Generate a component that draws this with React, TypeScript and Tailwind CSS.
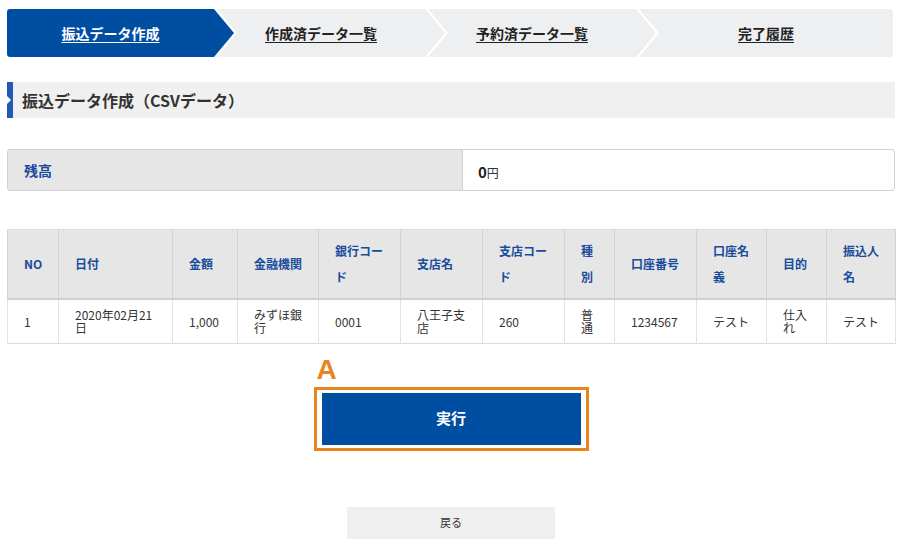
import React from 'react';

const steps = [
  { label: '振込データ作成', active: true },
  { label: '作成済データ一覧', active: false },
  { label: '予約済データ一覧', active: false },
  { label: '完了履歴', active: false },
];

const headers = ['NO', '日付', '金額', '金融機関', '銀行コード', '支店名', '支店コード', '種別', '口座番号', '口座名義', '目的', '振込人名'];
const row = ['1', '2020年02月21日', '1,000', 'みずほ銀行', '0001', '八王子支店', '260', '普通', '1234567', 'テスト', '仕入れ', 'テスト'];
const widths = ['w-[51px]', 'w-[114px]', 'w-[65px]', 'w-[81px]', 'w-[82px]', 'w-[82px]', 'w-[82px]', 'w-[50px]', 'w-[82px]', 'w-[70px]', 'w-[60px]', 'w-[69px]'];

const StepBar: React.FC = () => (
  <div className="flex h-[48px] mr-[2px]">
    {steps.map((step, i) => {
      const first = i === 0;
      const last = i === steps.length - 1;
      const shape = first
        ? 'w-[227px] rounded-l-[3px] pr-[20px] [clip-path:polygon(0_0,calc(100%_-_20px)_0,100%_50%,calc(100%_-_20px)_100%,0_100%)]'
        : last
          ? 'flex-1 -ml-[17px] rounded-r-[3px] [clip-path:polygon(0_0,100%_0,100%_100%,0_100%,20px_50%)]'
          : 'w-[228px] -ml-[17px] pr-[20px] [clip-path:polygon(0_0,calc(100%_-_20px)_0,100%_50%,calc(100%_-_20px)_100%,0_100%,20px_50%)]';
      return (
        <div
          key={i}
          className={`${shape} flex items-center justify-center ${step.active ? 'bg-[#004ea2] text-white' : 'bg-[#eeeff0] text-[#222]'}`}
        >
          <span className="text-[14px] font-bold underline underline-offset-[3px]">{step.label}</span>
        </div>
      );
    })}
  </div>
);

export default function App() {
  return (
    <div className="w-[910px] h-[547px] bg-white pt-[9px] font-['Noto_Sans_CJK_JP',sans-serif] text-[#333]">
      <div className="w-[888px] ml-[7px]">
        <StepBar />

        <div className="mt-[25px] h-[36px] flex items-center bg-[#f0f0f0]">
          <div className="relative w-[6px] h-full bg-[#1f5bb5]">
            <div className="absolute left-0 top-1/2 -translate-y-1/2 w-0 h-0 border-y-[4px] border-y-transparent border-l-[4px] border-l-white" />
          </div>
          <h2 className="ml-[9px] text-[16px] font-bold leading-none text-[#333]">振込データ作成（CSVデータ）</h2>
        </div>

        <div className="mt-[31px] flex h-[42px]">
          <div className="w-[456px] flex items-center bg-[#e6e6e6] border border-[#d2d2d2] rounded-l-[3px] pl-[16px]">
            <span className="text-[14px] font-bold text-[#1a4c9c]">残高</span>
          </div>
          <div className="flex-1 flex items-baseline pt-[11px] bg-white border border-l-0 border-[#d2d2d2] rounded-r-[4px] pl-[15px]">
            <span className="text-[15px] font-bold text-[#222]">0</span>
            <span className="text-[12px] text-[#333]">円</span>
          </div>
        </div>

        <table className="mt-[38px] w-full table-fixed border-collapse border border-[#dcdcdc]">
          <colgroup>
            {widths.map((w, i) => (
              <col key={i} className={w} />
            ))}
          </colgroup>
          <thead>
            <tr className="h-[67px] bg-[#e6e6e6]">
              {headers.map((h, i) => (
                <th
                  key={i}
                  className="pl-[16px] pr-[12px] py-[8px] text-left align-middle text-[12px] leading-[26px] font-bold text-[#1a4c9c] border-x border-[#d4d4d4] border-b-2 border-b-[#d0d0d0]"
                >
                  {h}
                </th>
              ))}
            </tr>
          </thead>
          <tbody>
            <tr className="h-[44px] bg-white">
              {row.map((c, i) => (
                <td
                  key={i}
                  className="pl-[16px] pr-[12px] py-[4px] text-left align-middle text-[12px] leading-[13px] text-[#333] border-x border-[#e2e2e2]"
                >
                  {c}
                </td>
              ))}
            </tr>
          </tbody>
        </table>

        <div className="mt-[12px] flex flex-col items-center">
          <div className="w-[275px]">
            <div className="h-[28px] pl-[3px] font-['Liberation_Sans',sans-serif] text-[28px] font-bold leading-none text-[#e8851f]">A</div>
            <div className="mt-[3px] border-[3px] border-[#e8851f] px-[5px] py-[3px]">
              <button className="w-full h-[52px] bg-[#004ea2] text-white text-[15px] font-bold flex items-center justify-center">
                実行
              </button>
            </div>
          </div>
          <button className="mt-[56px] w-[208px] h-[32px] bg-[#efefef] text-[11px] text-[#333] flex items-center justify-center">
            戻る
          </button>
        </div>
      </div>
    </div>
  );
}
